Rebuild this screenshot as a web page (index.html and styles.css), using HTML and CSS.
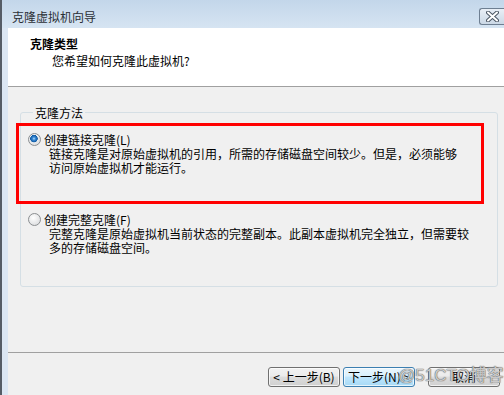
FILE: index.html
```html
<!DOCTYPE html>
<html lang="zh-CN">
<head>
  <meta charset="UTF-8">
  <title>克隆虚拟机向导</title>
  <link rel="stylesheet" href="styles.css">
</head>
<body>
  <div class="window">
    <div class="titlebar">
      <span class="title">克隆虚拟机向导</span>
      <button class="close" type="button">
        <svg width="13" height="11" viewBox="0 0 13 11">
          <path d="M2 1.5 L11 9.5 M11 1.5 L2 9.5" stroke="#4a5563" stroke-width="4" stroke-linecap="round"/>
          <path d="M2 1.5 L11 9.5 M11 1.5 L2 9.5" stroke="#ffffff" stroke-width="2" stroke-linecap="round"/>
        </svg>
      </button>
    </div>
    <div class="frame">
      <div class="content">
        <div class="header">
          <h1>克隆类型</h1>
          <p>您希望如何克隆此虚拟机?</p>
        </div>
        <div class="main">
          <fieldset class="group">
            <legend>克隆方法</legend>
            <div class="option">
              <label class="option-label"><span class="radio checked"></span>创建链接克隆(L)</label>
              <p class="option-desc">链接克隆是对原始虚拟机的引用，所需的存储磁盘空间较少。但是，必须能够<br>访问原始虚拟机才能运行。</p>
            </div>
            <div class="option option-second">
              <label class="option-label"><span class="radio"></span>创建完整克隆(F)</label>
              <p class="option-desc">完整克隆是原始虚拟机当前状态的完整副本。此副本虚拟机完全独立，但需要较<br>多的存储磁盘空间。</p>
            </div>
          </fieldset>
        </div>
        <div class="footer">
          <button type="button" class="btn">&lt; 上一步(B)</button>
          <button type="button" class="btn btn-default">下一步(N) &gt;</button>
          <button type="button" class="btn btn-cancel">取消</button>
        </div>
      </div>
    </div>
    <div class="highlight"></div>
    <div class="watermark">@51CTO博客</div>
  </div>
</body>
</html>
```
FILE: styles.css
```css
* {
  margin: 0;
  padding: 0;
  box-sizing: border-box;
}

body {
  font-family: "Noto Sans CJK SC", "Liberation Sans", sans-serif;
  font-size: 12px;
  color: #000;
  background: #f0f0f0;
  overflow: hidden;
}

.window {
  position: relative;
  width: 504px;
  height: 395px;
  display: flex;
  flex-direction: column;
  border-left: 2px solid #555c66;
  background: #dbe6f3;
}

.titlebar {
  height: 28px;
  display: flex;
  justify-content: space-between;
  align-items: flex-start;
  padding-left: 10px;
  background: linear-gradient(to bottom, #c3d6ea, #d6e4f2);
}

.title {
  line-height: 14px;
  margin-top: 10px;
  color: #2b2f36;
}

.close {
  width: 25px;
  height: 17px;
  margin-top: 8px;
  border: 1px solid #6e7f92;
  border-right: none;
  border-radius: 3px 0 0 3px;
  background: linear-gradient(to bottom, #e9eff6, #cbd8e6);
  display: flex;
  align-items: center;
  justify-content: center;
}

.frame {
  flex: 1;
  display: flex;
  padding-left: 6px;
  background: #dbe6f3;
}

.content {
  flex: 1;
  display: flex;
  flex-direction: column;
  background: #f0f0f0;
}

.header {
  height: 59px;
  background: #fff;
  border-bottom: 1px solid #a0a0a0;
  padding: 9px 0 0 22px;
}

.header h1 {
  font-size: 12px;
  font-weight: bold;
  line-height: 14px;
}

.header p {
  line-height: 14px;
  margin: 3px 0 0 22px;
}

.main {
  height: 265px;
  padding: 19px 6px 0 12px;
}

.group {
  height: 181px;
  border: 1px solid #d5dfe5;
  border-radius: 3px;
  padding: 14px 7px 0 7px;
}

.group legend {
  line-height: 13px;
  margin-left: 5px;
  padding: 0 2px;
}

.option-label {
  display: flex;
  align-items: center;
  height: 13px;
  line-height: 13px;
}

.radio {
  width: 13px;
  height: 13px;
  margin-right: 3px;
  border-radius: 50%;
  border: 1px solid #8b8e91;
  background: radial-gradient(circle at 40% 35%, #ffffff, #d4d6d8);
}

.radio.checked {
  background:
    radial-gradient(circle at 45% 42%, #b7e3ff 0, #3a8ad6 1.5px, #0f5aa3 3.5px, transparent 4px),
    radial-gradient(circle at 40% 35%, #ffffff, #d4d6d8);
}

.option-desc {
  line-height: 14px;
  margin: 1px 0 0 21px;
}

.option-second {
  margin-top: 38px;
}

.footer {
  flex: 1;
  border-top: 1px solid #a0a0a0;
  display: flex;
  justify-content: flex-end;
  align-items: flex-start;
  padding: 14px 4px 0 0;
}

.btn {
  width: 72px;
  height: 20px;
  font-family: inherit;
  font-size: 12px;
  line-height: 18px;
  color: #000;
  border: 1px solid #707070;
  border-radius: 3px;
  background: linear-gradient(to bottom, #f2f2f2 0, #ebebeb 45%, #dddddd 50%, #cfcfcf 100%);
  box-shadow: inset 0 0 0 1px rgba(255, 255, 255, 0.7);
}

.btn + .btn {
  margin-left: 3px;
}

.btn-default {
  border-color: #3c7fb1;
  background: linear-gradient(to bottom, #eaf6fd 0, #d9f0fc 45%, #bee6fd 50%, #a7d9f5 100%);
}

.btn.btn-cancel {
  margin-left: 13px;
}

.highlight {
  position: absolute;
  left: 14px;
  top: 123px;
  width: 468px;
  height: 81px;
  border: 3px solid #ff0000;
}

.watermark {
  position: absolute;
  left: 396px;
  top: 366px;
  font-family: "Liberation Sans", "Noto Sans CJK SC", sans-serif;
  font-size: 17px;
  line-height: 20px;
  color: rgba(240, 240, 240, 0.75);
  text-shadow: 0 0 1px #555, 0 0 1px #555;
}
```
